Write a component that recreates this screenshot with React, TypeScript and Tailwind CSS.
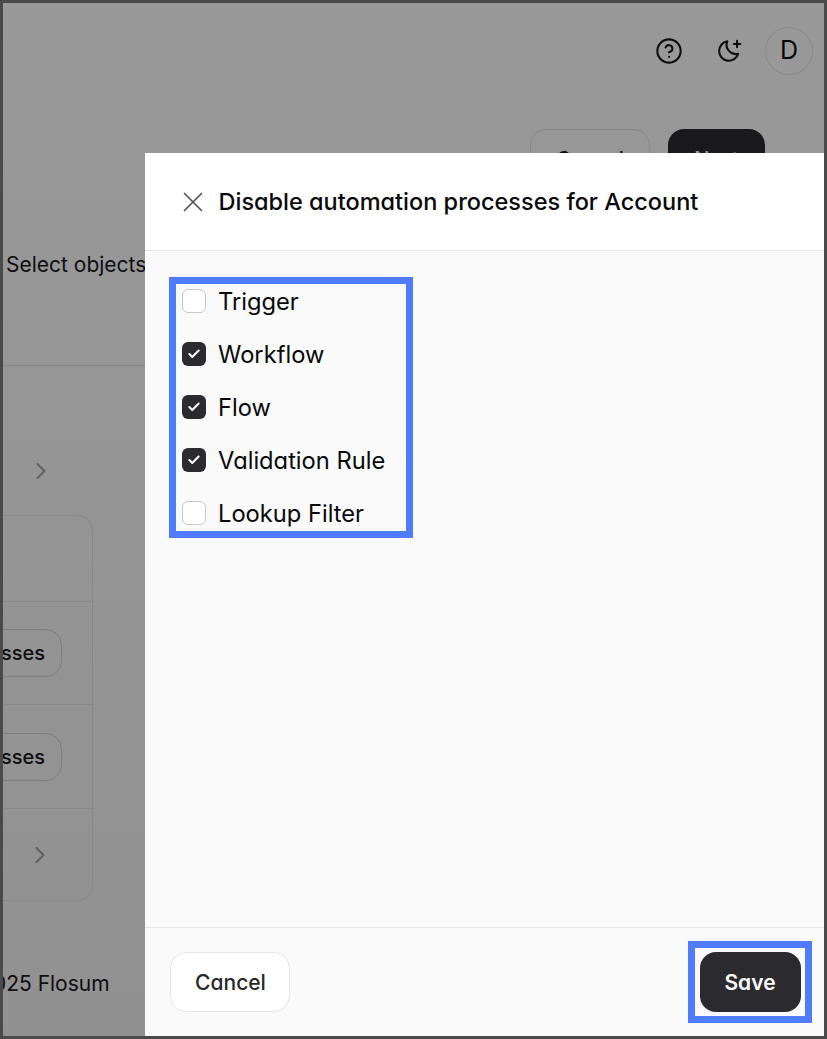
import { Check, ChevronRight, CircleHelp } from "lucide-react";

const font = "font-['Inter',sans-serif] [font-feature-settings:'cv11']";

const processes = [
  { label: "Trigger", checked: false },
  { label: "Workflow", checked: true },
  { label: "Flow", checked: true },
  { label: "Validation Rule", checked: true },
  { label: "Lookup Filter", checked: false },
];

function MoonPlus() {
  return (
    <svg width="26" height="26" viewBox="0 0 24 24" fill="none" stroke="currentColor" strokeWidth="1.9" strokeLinecap="round" strokeLinejoin="round" className="mt-[11px] mr-[22px]">
      <path d="M9.5 3.1a8.5 8.5 0 0 0 10.1 11.4A9 9 0 1 1 9.5 3.1Z" />
      <path d="M18.5 2.5v6M15.5 5.5h6" />
    </svg>
  );
}

function ProcessRow({ label, checked }: { label: string; checked: boolean }) {
  return (
    <div className="flex h-[53px] items-center gap-[12px]">
      {checked ? (
        <span className="-mt-0.5 flex h-6 w-6 items-center justify-center rounded-md bg-[#2a2a2f] text-white">
          <Check size={14} strokeWidth={3.5} />
        </span>
      ) : (
        <span className="-mt-0.5 h-6 w-6 rounded-md border border-[#c9c9c9] bg-white" />
      )}
      <span className="text-[23.7px] leading-none text-[#09090b]">{label}</span>
    </div>
  );
}

function BackgroundPage() {
  return (
    <div className="flex h-full flex-col bg-linear-to-b from-white to-[#f2f2f2] text-[#18181b]">
      <div className="flex h-[124px] items-start justify-end pt-6 pr-[11px]">
        <CircleHelp size={28} strokeWidth={1.8} className="mt-[10px] mr-[34px]" />
        <MoonPlus />
        <div className="flex h-12 w-12 items-center justify-center rounded-full border border-[#e4e4e7] text-[25px] text-[#09090b]">D</div>
      </div>
      <div className="mt-[2px] flex h-[100px] items-start justify-end gap-[18px] pr-[59px]">
        <div className="flex h-[59px] w-[120px] items-center justify-center rounded-2xl border border-[#e4e4e7] text-xl font-medium">Cancel</div>
        <div className="flex h-[59px] w-[97px] items-center justify-center rounded-2xl bg-[#2a2a2f] text-xl font-medium text-white">Next</div>
      </div>
      <div className="mt-[25px] h-[112px] border-b border-[#e4e4e7] pl-[3px] text-[21px] leading-none">Select objects</div>
      <div className="flex h-[149px] items-start pt-[91px] pl-6 text-[#a1a1aa]">
        <ChevronRight size={28} strokeWidth={1.8} />
      </div>
      <div className="-ml-5 flex h-[386px] w-[110px] flex-col rounded-2xl border border-[#e4e4e7]">
        <div className="h-[86px] border-b border-[#e4e4e7]" />
        <div className="flex h-[103px] items-center border-b border-[#e4e4e7]">
          <div className="-ml-[100px] flex h-12 w-[178px] items-center justify-end rounded-2xl border border-[#d4d4d8] pr-4 text-xl font-medium">Processes</div>
        </div>
        <div className="flex h-[104px] items-center border-b border-[#e4e4e7]">
          <div className="-ml-[100px] flex h-12 w-[178px] items-center justify-end rounded-2xl border border-[#d4d4d8] pr-4 text-xl font-medium">Processes</div>
        </div>
        <div className="flex flex-1 items-center justify-end pt-[1px] pr-[38px] text-[#a1a1aa]">
          <ChevronRight size={28} strokeWidth={1.8} />
        </div>
      </div>
      <div className="mt-[72px] -ml-[48px] text-[21px] leading-none whitespace-nowrap">© 2025 Flosum</div>
    </div>
  );
}

export default function App() {
  return (
    <div className={`relative h-[1039px] w-[827px] overflow-hidden border-[3px] border-[#4a4a4a] ${font}`}>
      <BackgroundPage />
      <div className="absolute inset-0 bg-black/40" />

      <div className="absolute top-[150px] right-0 bottom-0 left-[142px] flex flex-col bg-[#fafafa]">
        <div className="flex h-[98px] items-center gap-[15.5px] border-b border-[#e7e7e7] bg-white pl-[38px]">
          <svg width="20" height="20" viewBox="0 0 20 20" fill="none" stroke="#52525b" strokeWidth="1.7" strokeLinecap="round">
            <path d="M1.5 1.5l17 17M18.5 1.5l-17 17" />
          </svg>
          <h2 className="text-[23.5px] font-medium whitespace-nowrap text-[#09090b]">Disable automation processes for Account</h2>
        </div>

        <div className="flex-1 pt-6 pl-[37px]">
          {processes.map((p) => (
            <ProcessRow key={p.label} label={p.label} checked={p.checked} />
          ))}
        </div>

        <div className="flex h-[109px] items-center justify-between border-t border-[#e7e7e7] pr-[23px] pl-[25px]">
          <button className="h-[60px] w-[120px] rounded-2xl border border-[#e7e7e7] bg-white pt-0.5 pl-px text-[21px] font-medium text-[#27272a]">Cancel</button>
          <button className="h-[60px] w-[101px] rounded-2xl bg-[#2a2a2f] pt-0.5 pr-px text-[21px] font-semibold text-white">Save</button>
        </div>

        {/* annotation boxes drawn over the modal */}
        <div className="absolute top-[124px] left-[24px] h-[261px] w-[244px] border-[7px] border-[#4f7bff]" />
        <div className="absolute right-[12px] bottom-[13px] h-[82px] w-[124px] border-[7px] border-[#4f7bff]" />
      </div>
    </div>
  );
}
